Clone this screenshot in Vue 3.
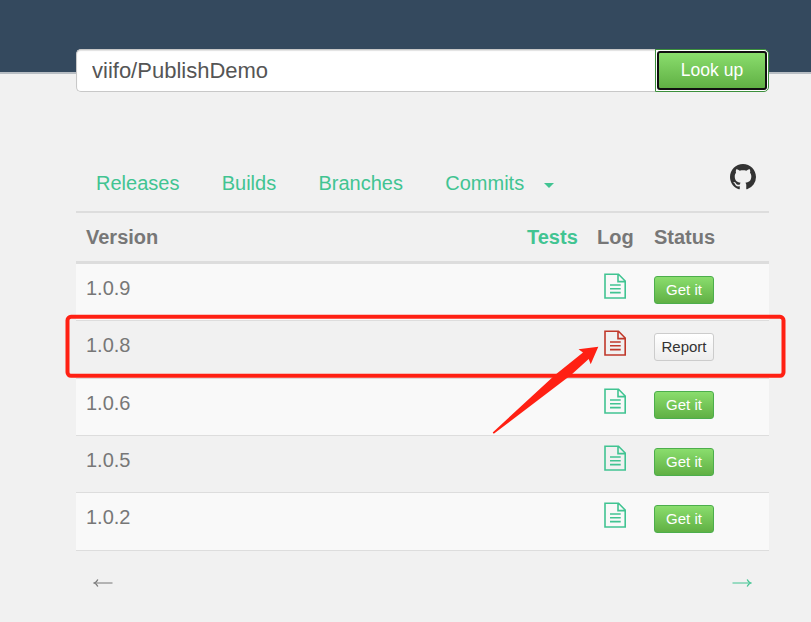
<script setup>
const tabs = ['Releases', 'Builds', 'Branches']
const builds = [
  { version: '1.0.9', ok: true },
  { version: '1.0.8', ok: false },
  { version: '1.0.6', ok: true },
  { version: '1.0.5', ok: true },
  { version: '1.0.2', ok: true },
]
</script>

<template>
  <div class="page">
    <header class="masthead">
      <form class="search" @submit.prevent>
        <input class="query" type="text" value="viifo/PublishDemo" spellcheck="false" />
        <button class="lookup" type="submit"><span>Look up</span></button>
      </form>
    </header>

    <main class="content">
      <nav class="tabs">
        <a v-for="tab in tabs" :key="tab" class="tab">{{ tab }}</a>
        <a class="tab">Commits<span class="caret"></span></a>
        <svg class="github" viewBox="0 0 16 16">
          <path d="M8 0C3.58 0 0 3.58 0 8c0 3.54 2.29 6.53 5.47 7.59.4.07.55-.17.55-.38 0-.19-.01-.82-.01-1.49-2.01.37-2.53-.49-2.69-.94-.09-.23-.48-.94-.82-1.13-.28-.15-.68-.52-.01-.53.63-.01 1.08.58 1.23.82.72 1.21 1.87.87 2.33.66.07-.52.28-.87.51-1.07-1.78-.2-3.64-.89-3.64-3.95 0-.87.31-1.59.82-2.15-.08-.2-.36-1.02.08-2.12 0 0 .67-.21 2.2.82.64-.18 1.32-.27 2-.27s1.36.09 2 .27c1.53-1.04 2.2-.82 2.2-.82.44 1.1.16 1.92.08 2.12.51.56.82 1.27.82 2.15 0 3.07-1.87 3.75-3.65 3.95.29.25.54.73.54 1.48 0 1.07-.01 1.93-.01 2.2 0 .21.15.46.55.38A8.01 8.01 0 0 0 16 8c0-4.42-3.58-8-8-8z" />
        </svg>
      </nav>

      <section class="table">
        <div class="row head">
          <span>Version</span>
          <span class="tests">Tests</span>
          <span class="log-head">Log</span>
          <span>Status</span>
        </div>
        <div v-for="build in builds" :key="build.version" class="row item">
          <span class="version">{{ build.version }}</span>
          <span></span>
          <a class="log" :class="{ failed: !build.ok }">
            <svg width="22" height="26" viewBox="0 0 22 26">
              <path d="M1 1.3H14.5L21.2 8V25H1ZM14 1.3V8.6H21" />
              <path d="M6 12H16.7M6 15.8H16.7M6 19.6H16.7" />
            </svg>
          </a>
          <button class="action" :class="{ get: build.ok }">{{ build.ok ? 'Get it' : 'Report' }}</button>
        </div>
      </section>

      <footer class="pager">
        <svg class="prev" width="20" height="10" viewBox="0 0 20 10">
          <path class="shaft" d="M2 5H19.5" />
          <path class="tip" d="M4.8 1.5Q3.8 4 1.2 5Q3.8 6 4.8 8.5" />
        </svg>
        <svg class="next" width="20" height="10" viewBox="0 0 20 10">
          <path class="shaft" d="M.5 5H18" />
          <path class="tip" d="M15.2 1.5Q16.2 4 18.8 5Q16.2 6 15.2 8.5" />
        </svg>
      </footer>
    </main>

    <svg class="annotation" width="811" height="622" viewBox="0 0 811 622">
      <rect x="67.5" y="316.8" width="716" height="59" rx="3.5" />
      <path d="M492.7 432.4L555 375L583 352.5L578.5 349.2L598.3 346.8L590.7 364.3L588.7 359L571 375L493.8 433.8Z" />
    </svg>
  </div>
</template>

<style>
body {
  margin: 0;
  background: #f1f1f1;
}
</style>

<style scoped>
.page {
  position: relative;
  box-sizing: border-box;
  width: 811px;
  height: 622px;
  overflow: hidden;
  background: #f1f1f1;
  color: #777;
  font: 20px/24px "Liberation Sans", Arial, sans-serif;
}
.masthead {
  box-sizing: border-box;
  height: 74px;
  padding: 49px 42px 0 76px;
  background: #34495e;
  border-bottom: 2px solid #b8bec4;
}
.search {
  display: flex;
  height: 43px;
}
.query {
  box-sizing: border-box;
  flex: 1;
  min-width: 0;
  padding: 0 15px;
  border: 1px solid #c8c8c8;
  border-right: 0;
  border-radius: 5px 0 0 5px;
  outline: 0;
  background: #fff;
  box-shadow: inset 0 1px 1px rgba(0, 0, 0, .12);
  color: #555;
  font: 22px "Liberation Sans", Arial, sans-serif;
}
.lookup {
  box-sizing: border-box;
  display: flex;
  width: 114px;
  padding: 1px;
  border: 1px solid #3c8f3c;
  border-radius: 0 5px 5px 0;
  background: #fff;
  color: #fff;
  font: 17.5px/33px "Liberation Sans", Arial, sans-serif;
}
.lookup span {
  box-sizing: border-box;
  flex: 1;
  height: 39px;
  padding-top: 1px;
  border: 2px solid #101010;
  border-radius: 3px;
  background: linear-gradient(#8add6d, #60b044);
}
.content {
  padding: 0 42px 0 76px;
}
.tabs {
  display: flex;
  align-items: flex-start;
  box-sizing: border-box;
  height: 137px;
  padding: 97px 13px 0 20px;
  gap: 42.3px;
}
.tab {
  display: flex;
  align-items: center;
  color: #41c492;
}
.caret {
  margin: 5px 0 0 20px;
  border: 5px solid transparent;
  border-top-color: #41c492;
  border-bottom: 0;
}
.github {
  width: 26px;
  height: 26px;
  margin: -7px 0 0 auto;
  fill: #333;
}
.table {
  display: grid;
  grid-template-rows: 53px 56px 58px 57px 57px 58px;
  border-bottom: 1px solid #ddd;
}
.row {
  display: grid;
  grid-template-columns: 441px 77px 50px 60px;
  align-items: start;
  box-sizing: border-box;
  padding-left: 10px;
  border-top: 1px solid #ddd;
}
.head {
  padding-top: 12px;
  border-top-width: 2px;
  border-bottom: 3px solid #ddd;
  font-weight: bold;
}
.log-head {
  margin-left: -7px;
}
.tests {
  color: #41c492;
}
.item:nth-child(even) {
  border-top: 0;
  background: #f9f9f9;
}
.item:nth-child(n + 3) {
  border-top: 1px solid #ddd;
}
.version {
  padding-top: 12px;
}
.log {
  height: 26px;
  margin-top: 9px;
  color: #41c492;
}
.log.failed {
  color: #c0392b;
}
.log svg {
  display: block;
  fill: none;
  stroke: currentColor;
  stroke-width: 1.6;
}
.action {
  box-sizing: border-box;
  width: 60px;
  height: 28px;
  margin-top: 12px;
  padding: 0 0 2px;
  border: 1px solid #ccc;
  border-radius: 3px;
  background: linear-gradient(#fff, #ededed);
  color: #333;
  font: 15px "Liberation Sans", Arial, sans-serif;
}
.action.get {
  border-color: #4cae4c;
  background: linear-gradient(#8add6d, #60b044);
  color: #fff;
}
.pager {
  display: flex;
  justify-content: space-between;
  padding: 27px 17px 0;
}
.pager svg {
  display: block;
  fill: none;
  stroke: #777;
}
.pager .next {
  stroke: #41c492;
}
.pager .tip {
  stroke-width: 1.3;
}
.annotation {
  position: absolute;
  inset: 0;
  pointer-events: none;
}
.annotation rect {
  fill: none;
  stroke: #ff2013;
  stroke-width: 4;
}
.annotation path {
  fill: #ff2013;
}
</style>
